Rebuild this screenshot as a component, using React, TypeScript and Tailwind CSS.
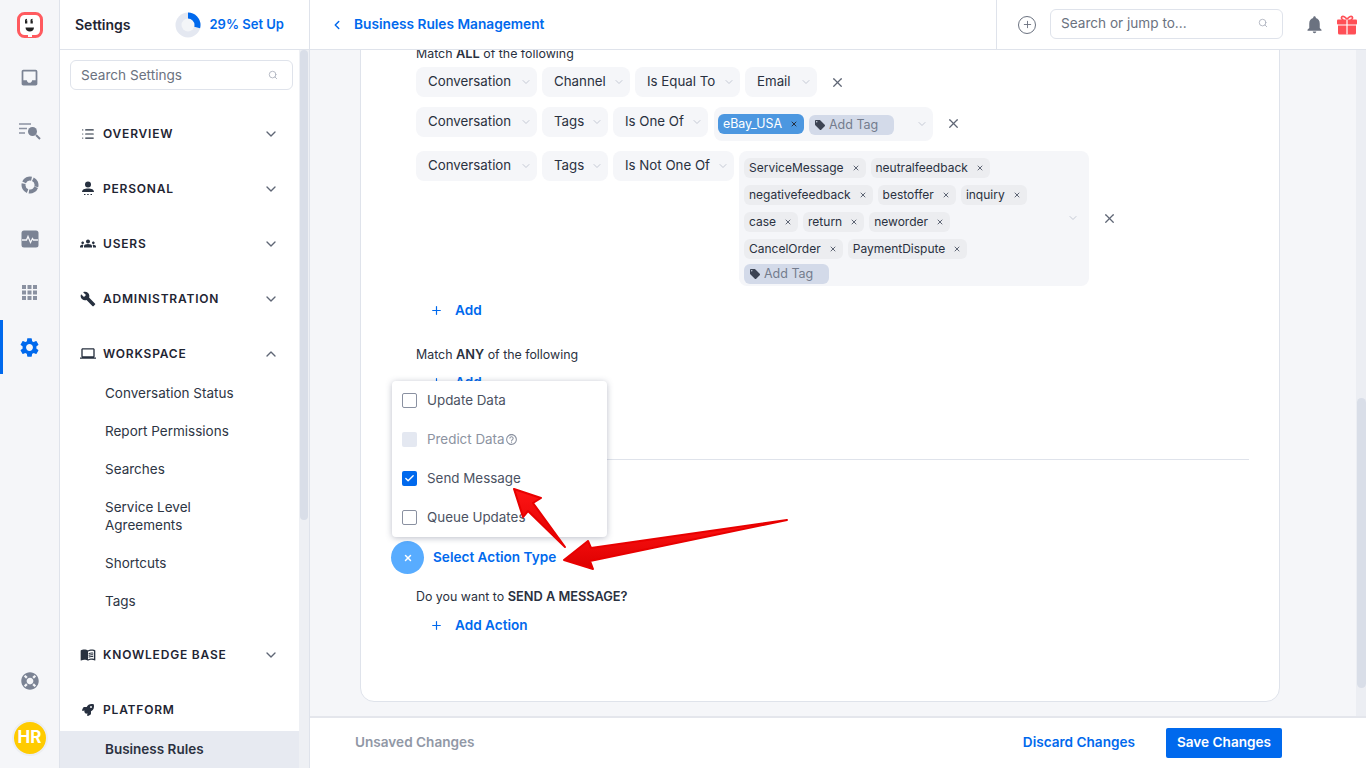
import { ChevronDown, ChevronLeft, ChevronUp, Plus, Search, X, Check, List } from "lucide-react";
import { MdBuild, MdGroups, MdHelpOutline, MdLaptop, MdLocalOffer, MdMenuBook, MdNotifications, MdSettings, MdInbox } from "react-icons/md";
import { FaLifeRing, FaRocket } from "react-icons/fa";
import type { ReactNode } from "react";

function Logo() {
  return (
    <svg width="26" height="26" viewBox="0 0 26 26">
      <rect x="1.500" y="1.500" width="23" height="23" rx="6" fill="#fff" stroke="#ff5a5f" strokeWidth="3" />
      <path d="M8 8.500c0-1 .8-1.800 2-1.800v1.200c-.5 0-.7.3-.7.6h1v2.900H8zM13.500 8.500c0-1 .8-1.800 2-1.800v1.200c-.5 0-.7.3-.7.6h1v2.900h-2.300z" fill="#222" />
      <path d="M8.500 15.500h8.500c0 2.500-2 4-4.200 4s-4.300-1.500-4.300-4z" fill="#222" />
      <rect x="11" y="22" width="4" height="3" fill="#fff" />
    </svg>
  );
}

function ListSearch() {
  return (
    <svg width="24" height="18" viewBox="0 0 24 18" fill="none">
      <path d="M1 2h12M1 6.500h8M1 11h6" stroke="#8a91a1" strokeWidth="1.300" />
      <circle cx="14.500" cy="9.500" r="4.500" fill="#7b8394" />
      <path d="M18 13l4 4" stroke="#7b8394" strokeWidth="2" />
    </svg>
  );
}

function Segments() {
  return (
    <svg width="18" height="18" viewBox="0 0 18 18" fill="none">
      <circle cx="9" cy="9" r="6.500" stroke="#7b8394" strokeWidth="4" strokeDasharray="8.700 1.500" transform="rotate(20 9 9)" />
    </svg>
  );
}

function Pulse() {
  return (
    <svg width="18" height="18" viewBox="0 0 18 18">
      <rect x="0.500" y="0.500" width="17" height="17" rx="2.500" fill="#7b8394" />
      <path d="M1 10h4.500l1.500-3.500 2.500 6 2-4 1 1.500H17" stroke="#f5f6f9" strokeWidth="1.300" fill="none" />
    </svg>
  );
}

function GridDots() {
  return (
    <svg width="16" height="16" viewBox="0 0 16 16" fill="#8a91a1">
      {[0, 5.500, 11].flatMap((y) => [0, 5.500, 11].map((x) => <rect key={`${x}-${y}`} x={x} y={y} width="4" height="4" />))}
    </svg>
  );
}

function Donut() {
  return (
    <svg width="26" height="26" viewBox="0 0 26 26" fill="none">
      <circle cx="13" cy="13" r="12.500" fill="#e4e8f1" />
      <circle cx="13" cy="13" r="6.500" fill="#f3f5f8" />
      <circle cx="13" cy="13" r="9.500" stroke="#0069ed" strokeWidth="6" strokeDasharray="17.300 60" transform="rotate(-90 13 13)" />
    </svg>
  );
}

function PersonDots() {
  return (
    <svg width="14" height="15" viewBox="0 0 14 15" fill="#27303f">
      <circle cx="7" cy="3.500" r="3" />
      <path d="M1 11c0-2.500 2.500-3.500 6-3.500s6 1 6 3.500z" />
      <path d="M3 13h1.500v1H3zM6.200 13h1.500v1H6.200zM9.500 13H11v1H9.500z" />
    </svg>
  );
}

function Gift() {
  return (
    <svg width="20" height="20" viewBox="0 0 20 20" fill="none">
      <path d="M6.500 4.500C4.500 4.500 4 2.800 4.800 1.900 5.800.8 8.500 1.500 10 4.500c1.500-3 4.200-3.700 5.200-2.600.8.9.3 2.600-1.700 2.600" stroke="#ff4f56" strokeWidth="1.600" />
      <rect x="0" y="4.500" width="20" height="5" rx="1" fill="#ff4f56" />
      <path d="M1 10.500h18V18a1.500 1.500 0 0 1-1.500 1.500h-15A1.500 1.500 0 0 1 1 18z" fill="#ff4f56" />
      <rect x="9.300" y="4.500" width="1.400" height="15" fill="#fff" fillOpacity="0.85" />
    </svg>
  );
}

function RailIcon({ children, active }: { children: ReactNode; active?: boolean }) {
  return (
    <div className={active ? "flex h-[54px] items-center justify-center border-l-[3px] border-[#0069ed] pr-[3px]" : "flex h-[54px] items-center justify-center"}>
      {children}
    </div>
  );
}

function Section({ icon, label, open, noChevron }: { icon: ReactNode; label: string; open?: boolean; noChevron?: boolean }) {
  return (
    <div className="flex h-[55px] items-center pl-[20px] pr-[20px]">
      <span className="flex w-[16px] items-center justify-center text-[#27303f]">{icon}</span>
      <span className="ml-[7px] flex-1 text-[12px] font-semibold tracking-[0.8px] text-[#1f2533]">{label}</span>
      {noChevron ? null : open ? (
        <ChevronUp size={16} className="text-[#5f6675]" />
      ) : (
        <ChevronDown size={16} className="text-[#5f6675]" />
      )}
    </div>
  );
}

function Sub({ children, tall }: { children: ReactNode; tall?: boolean }) {
  return <div className={tall ? "flex h-[56px] items-center pl-[45px] pr-[90px] text-[13.5px] leading-[18px] text-[#2d3544]" : "flex h-[38px] items-center pl-[45px] text-[13.5px] text-[#2d3544]"}>{children}</div>;
}

function Pill({ children, width }: { children: ReactNode; width: string }) {
  return (
    <div className={`flex h-[30px] items-center justify-between rounded-lg bg-[#f5f6f9] pl-[12px] pr-[5px] text-[13.3px] text-[#2a3140] ${width}`}>
      <span>{children}</span>
      <ChevronDown size={12} className="text-[#c5cad5]" />
    </div>
  );
}

function Chip({ children }: { children: ReactNode }) {
  return (
    <div className="flex h-[20px] items-center gap-[8px] rounded-md bg-[#ecedf0] pl-[5px] pr-[6px] text-[12px] text-[#2a3140]">
      {children}
      <X size={8} strokeWidth={3} className="text-[#5f6675]" />
    </div>
  );
}

function AddTag() {
  return (
    <div className="flex h-[20px] w-[85px] items-center gap-[3px] rounded-md bg-[#d3dae9] pl-[5px] text-[12.5px] text-[#747c8d]">
      <MdLocalOffer size={12} className="text-[#3d4454]" />
      Add Tag
    </div>
  );
}

function AddLink({ children }: { children: ReactNode }) {
  return (
    <div className="ml-[14px] flex h-[24px] items-center gap-[12px] text-[13.6px] font-semibold text-[#0069ed]">
      <Plus size={13} strokeWidth={2.200} />
      {children}
    </div>
  );
}

function MenuItem({ label, state }: { label: ReactNode; state?: "on" | "off" }) {
  return (
    <div className={state === "off" ? "flex h-[39px] items-center gap-[10px] pl-[10px] text-[13.4px] text-[#8c93a1]" : "flex h-[39px] items-center gap-[10px] pl-[10px] text-[13.4px] text-[#4b5262]"}>
      {state === "on" ? (
        <span className="flex h-[15px] w-[15px] items-center justify-center rounded-[2px] bg-[#0069ed]">
          <Check size={11} strokeWidth={3} className="text-white" />
        </span>
      ) : state === "off" ? (
        <span className="h-[15px] w-[15px] rounded-[2px] bg-[#e4e8f1]" />
      ) : (
        <span className="h-[15px] w-[15px] rounded-[2px] border border-[#8a91a1] bg-white" />
      )}
      {label}
    </div>
  );
}

export default function App() {
  return (
    <div className="relative flex h-[768px] w-[1366px] overflow-hidden bg-white [font-family:Inter,sans-serif]">
      {/* icon rail */}
      <div className="flex w-[60px] shrink-0 flex-col border-r border-[#dfe3eb] bg-[#f5f6f9]">
        <div className="flex h-[50px] items-center justify-center">
          <Logo />
        </div>
        <RailIcon>
          <MdInbox size={21} className="text-[#7b8394]" />
        </RailIcon>
        <RailIcon>
          <ListSearch />
        </RailIcon>
        <RailIcon>
          <Segments />
        </RailIcon>
        <RailIcon>
          <Pulse />
        </RailIcon>
        <RailIcon>
          <GridDots />
        </RailIcon>
        <RailIcon active>
          <MdSettings size={23} className="text-[#0069ed]" />
        </RailIcon>
        <div className="mt-auto flex flex-col items-center pb-[12px]">
          <FaLifeRing size={18} className="mb-[30px] text-[#7b8394]" />
          <div className="flex h-[36px] w-[36px] items-center justify-center rounded-full border-[2px] border-[#eceef2] bg-[#ffcb00] text-[17px] font-bold text-white">HR</div>
        </div>
      </div>

      {/* settings nav */}
      <div className="flex w-[250px] shrink-0 flex-col border-r border-[#dfe3eb]">
        <div className="flex h-[50px] shrink-0 items-center border-b border-[#dfe3eb] pl-[15px]">
          <span className="text-[14px] font-semibold text-[#1f2533]">Settings</span>
          <span className="ml-[44px]">
            <Donut />
          </span>
          <span className="ml-[9px] text-[13px] font-semibold text-[#0069ed]">29% Set Up</span>
        </div>
        <div className="flex min-h-0 flex-1">
          <div className="w-[239px] overflow-hidden">
            <div className="ml-[10px] mr-[6px] mt-[10px] flex h-[30px] items-center justify-between rounded-md border border-[#dfe3eb] pl-[10px] pr-[14px]">
              <span className="pt-px text-[13.6px] text-[#6b7280]">Search Settings</span>
              <Search size={10} className="text-[#a9afbb]" />
            </div>
            <div className="mt-[16px]">
              <Section icon={<List size={14} />} label="OVERVIEW" />
              <Section icon={<PersonDots />} label="PERSONAL" />
              <Section icon={<MdGroups size={17} />} label="USERS" />
              <Section icon={<MdBuild size={16} />} label="ADMINISTRATION" />
              <Section icon={<MdLaptop size={17} />} label="WORKSPACE" open />
              <div className="-mt-[7px]">
                <Sub>Conversation Status</Sub>
                <Sub>Report Permissions</Sub>
                <Sub>Searches</Sub>
                <Sub tall>Service Level Agreements</Sub>
                <Sub>Shortcuts</Sub>
                <Sub>Tags</Sub>
              </div>
              <div className="mt-[7px]">
                <Section icon={<MdMenuBook size={17} />} label="KNOWLEDGE BASE" />
              </div>
              <div className="h-[49px]">
                <Section icon={<FaRocket size={12} />} label="PLATFORM" noChevron />
              </div>
              <div className="flex h-[38px] items-center bg-[#e7eaf1] pb-[2px] pl-[45px] text-[13.5px] font-semibold text-[#2b3140]">Business Rules</div>
            </div>
          </div>
          <div className="w-[10px] bg-[#eef0f4]">
            <div className="mx-[1px] h-[470px] rounded-full bg-[#d9dee8]" />
          </div>
        </div>
      </div>

      {/* main */}
      <div className="flex min-w-0 flex-1 flex-col bg-[#f5f6f9]">
        <div className="flex h-[50px] shrink-0 items-center border-b border-[#dfe3eb] bg-white">
          <div className="flex h-full w-[687px] items-center border-r border-[#dfe3eb] pl-[20px]">
            <ChevronLeft size={14} strokeWidth={2.500} className="text-[#0069ed]" />
            <span className="ml-[10px] text-[13.7px] font-semibold text-[#0069ed]">Business Rules Management</span>
          </div>
          <div className="ml-[21px] flex h-[18px] w-[18px] items-center justify-center rounded-full border border-[#6b7280]">
            <Plus size={11} className="text-[#6b7280]" />
          </div>
          <div className="mb-[1px] ml-[14px] flex h-[30px] w-[233px] items-center justify-between rounded-md border border-[#dfe3eb] pl-[10px] pr-[14px]">
            <span className="pb-px text-[13.6px] text-[#6b7280]">Search or jump to...</span>
            <Search size={10} className="mb-[3px] text-[#a9afbb]" />
          </div>
          <MdNotifications size={21} className="ml-[21px] text-[#6b7280]" />
          <span className="ml-[12px]">
            <Gift />
          </span>
        </div>

        <div className="flex min-h-0 flex-1">
          <div className="min-w-0 flex-1 overflow-hidden pl-[50px] pr-[76px]">
            <div className="-mt-[7px] rounded-b-[14px] border border-[#dfe3eb] bg-white pb-[64px] pl-[55px] pt-px">
              <div className="flex h-[18px] items-center text-[12.4px] text-[#2a3140]">
                Match&nbsp;<b className="text-[12.8px] font-semibold">ALL</b>&nbsp;of the following
              </div>
              <div className="mt-[4px] flex items-center gap-[5px]">
                <Pill width="w-[121px]">Conversation</Pill>
                <Pill width="w-[88px]">Channel</Pill>
                <Pill width="w-[105px]">Is Equal To</Pill>
                <Pill width="w-[72px]">Email</Pill>
                <X size={15} className="ml-[8px] text-[#5f6675]" />
              </div>
              <div className="mt-[10px] flex items-start gap-[5px]">
                <Pill width="w-[121px]">Conversation</Pill>
                <Pill width="w-[66px]">Tags</Pill>
                <Pill width="w-[95px]">Is One Of</Pill>
                <div className="ml-px flex h-[34px] w-[219px] items-start gap-[5px] rounded-lg bg-[#f5f6f9] pl-[4px] pt-[7px]">
                  <div className="flex h-[20px] w-[86px] items-center justify-between rounded-md bg-[#4c97e0] pl-[5px] pr-[6px] text-[12.4px] text-white">
                    eBay_USA
                    <X size={8} strokeWidth={3} className="text-[#27303f]" />
                  </div>
                  <div className="mt-px">
                    <AddTag />
                  </div>
                  <ChevronDown size={12} className="ml-[17px] mt-[4px] text-[#c5cad5]" />
                </div>
                <X size={15} className="ml-[8px] mt-[9px] text-[#5f6675]" />
              </div>
              <div className="mt-[10px] flex items-start gap-[5px]">
                <Pill width="w-[121px]">Conversation</Pill>
                <Pill width="w-[66px]">Tags</Pill>
                <Pill width="w-[121px]">Is Not One Of</Pill>
                <div className="flex h-[135px] w-[350px] rounded-lg bg-[#f5f6f9] pl-[5px] pt-[7px]">
                  <div className="flex w-[300px] flex-wrap content-start gap-x-[5px] gap-y-[7px]">
                    {["ServiceMessage", "neutralfeedback", "negativefeedback", "bestoffer", "inquiry", "case", "return", "neworder", "CancelOrder", "PaymentDispute"].map((t) => (
                      <Chip key={t}>{t}</Chip>
                    ))}
                    <div className="-mt-[2px] w-full">
                      <AddTag />
                    </div>
                  </div>
                  <ChevronDown size={12} className="ml-[23px] mt-[54px] text-[#c5cad5]" />
                </div>
                <X size={15} className="ml-[8px] mt-[60px] text-[#5f6675]" />
              </div>
              <div className="mt-[12px]">
                <AddLink>Add</AddLink>
              </div>
              <div className="mt-[24px] flex h-[18px] items-center text-[12.4px] text-[#2a3140]">
                Match&nbsp;<b className="text-[12.8px] font-semibold">ANY</b>&nbsp;of the following
              </div>
              <div className="mt-[6px]">
                <AddLink>Add</AddLink>
              </div>
              <div className="-ml-[24px] mr-[30px] mt-[65px] h-px bg-[#dfe3eb]" />
              <div className="mt-[51px] flex h-[18px] items-center text-[12.6px] text-[#2a3140]">Perform the following action(s):</div>
              <div className="-ml-[25px] mt-[12px] flex h-[33px] items-center">
                <span className="flex h-[33px] w-[33px] items-center justify-center rounded-full bg-[#58acff]">
                  <X size={10} strokeWidth={3.500} className="text-white" />
                </span>
                <span className="ml-[9px] text-[13.6px] font-semibold text-[#0069ed]">Select Action Type</span>
              </div>
              <div className="mt-[14px] flex h-[18px] items-center text-[12.4px] text-[#2a3140]">
                Do you want to&nbsp;<b className="text-[12.8px] font-semibold">SEND A MESSAGE?</b>
              </div>
              <div className="mt-[7px]">
                <AddLink>Add Action</AddLink>
              </div>
            </div>
          </div>
          <div className="w-[10px] shrink-0 bg-[#eceef3]">
            <div className="ml-px mt-[348px] h-[290px] rounded-full bg-[#d9dee8]" />
          </div>
        </div>

        <div className="flex h-[52px] shrink-0 items-center border-t-2 border-[#e4e6ec] bg-white pb-px pl-[45px] pr-[84px]">
          <span className="text-[13.6px] font-semibold text-[#9198a6]">Unsaved Changes</span>
          <span className="ml-auto text-[13.6px] font-semibold text-[#0069ed]">Discard Changes</span>
          <button className="ml-[31px] h-[30px] w-[116px] rounded-[2px] bg-[#0069ed] text-[13.6px] font-semibold text-white">Save Changes</button>
        </div>
      </div>

      {/* action type dropdown */}
      <div className="absolute left-[392px] top-[381px] w-[215px] rounded-[4px] bg-white shadow-[0_1px_6px_rgba(60,70,100,0.35)]">
        <MenuItem label="Update Data" />
        <MenuItem
          state="off"
          label={
            <span className="flex items-center">
              Predict Data
              <MdHelpOutline size={13} />
            </span>
          }
        />
        <MenuItem state="on" label="Send Message" />
        <MenuItem label="Queue Updates" />
      </div>

      {/* red annotation arrows */}
      <svg className="pointer-events-none absolute left-0 top-0" width="1366" height="768" viewBox="0 0 1366 768">
        <defs>
          <linearGradient id="arrowRed" x1="0" y1="0" x2="0" y2="1">
            <stop offset="0" stopColor="#ff1414" />
            <stop offset="1" stopColor="#dc0000" />
          </linearGradient>
        </defs>
        <g fill="url(#arrowRed)" stroke="#e80000" strokeWidth="2" strokeLinejoin="round">
          <polygon points="787,520 591,548 588,541 564,560 593,569 590,561" />
          <polygon points="514,489 541,498 533,503 565,547 528,511 523,517" />
        </g>
      </svg>
    </div>
  );
}
